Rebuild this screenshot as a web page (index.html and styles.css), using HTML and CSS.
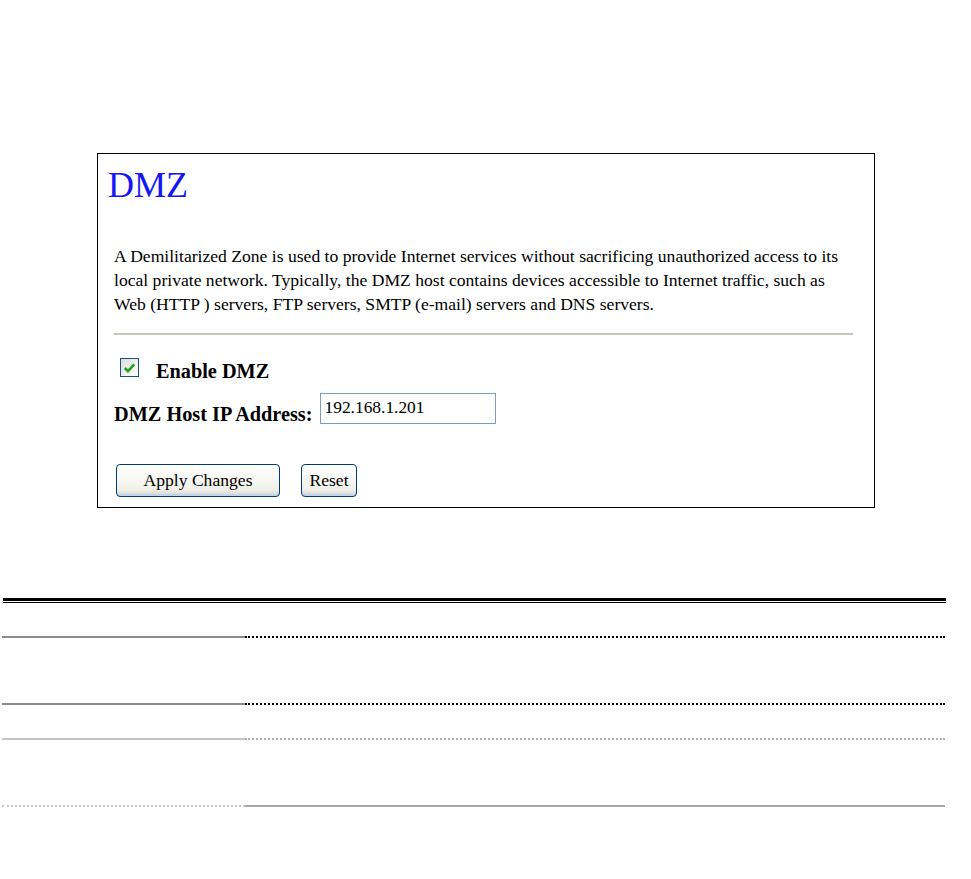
FILE: index.html
```html
<!DOCTYPE html>
<html lang="en">
<head>
  <meta charset="UTF-8" />
  <title>DMZ</title>
  <link rel="stylesheet" href="styles.css">
</head>
<body>
  <div class="panel">
    <h1 class="title">DMZ</h1>
    <p class="intro">A Demilitarized Zone is used to provide Internet services without sacrificing unauthorized access to its<br>
      local private network. Typically, the DMZ host contains devices accessible to Internet traffic, such as<br>
      Web (HTTP ) servers, FTP servers, SMTP (e-mail) servers and DNS servers.</p>
    <div class="sep"></div>

    <label class="row enable">
      <span class="check">
        <svg width="13" height="12" viewBox="0 0 13 12"><path d="M1.8 6 L5 9.2 L11.2 2.4" fill="none" stroke="#21a121" stroke-width="2.6"/></svg>
      </span>
      <b>Enable DMZ</b>
    </label>

    <div class="row host">
      <b>DMZ Host IP Address:</b>
      <input class="ip" type="text" value="192.168.1.201">
    </div>

    <div class="actions">
      <button class="btn apply">Apply Changes</button>
      <button class="btn reset">Reset</button>
    </div>
  </div>

  <div class="doc">
    <div class="rule"></div>
    <div class="grid">
      <div class="cell l dark"></div><div class="cell r dark"></div>
      <div class="cell l dark tall"></div><div class="cell r dark tall"></div>
      <div class="cell l light"></div><div class="cell r light"></div>
      <div class="cell l last tall"></div><div class="cell r last tall"></div>
    </div>
  </div>
</body>
</html>
```

FILE: styles.css
```css
body {
  margin: 0;
  background: #fff;
  font-family: "Liberation Serif", "Times New Roman", serif;
  color: #000;
}

.panel {
  margin: 153px 0 0 97px;
  width: 739px;
  height: 353px;
  border: 1px solid #000;
  padding: 0 21px 0 16px;
}

.title {
  margin: 11px 0 0 -6px;
  font-weight: normal;
  font-size: 36px;
  line-height: 40px;
  color: #1515f5;
}

.intro {
  margin: 39px 0 0;
  font-size: 17.6px;
  line-height: 24px;
}

.sep {
  margin-top: 17px;
  height: 0;
  border-top: 2px solid #c9c5bb;
}

.row {
  display: flex;
  align-items: flex-start;
  font-size: 20.3px;
  line-height: 24px;
  height: 24px;
}

.enable {
  margin: 24px 0 0 6px;
  gap: 17px;
}

.check {
  width: 17px;
  height: 17px;
  margin-top: -1px;
  border: 1px solid #1c5180;
  background: linear-gradient(135deg, #dcdcd7, #fff);
  display: flex;
  align-items: center;
  justify-content: center;
}

.host {
  margin-top: 19px;
  gap: 7px;
}

.ip {
  width: 176px;
  height: 31px;
  box-sizing: border-box;
  margin-top: -9px;
  padding: 0 4px 3px;
  border: 1px solid #7f9db9;
  font-family: "Liberation Serif", serif;
  font-size: 17.4px;
}

.actions {
  display: flex;
  gap: 21px;
  margin: 38px 0 0 2px;
}

.btn {
  height: 33px;
  border: 1px solid #003c74;
  border-radius: 4px;
  background: linear-gradient(#ffffff, #f0f0ea 80%, #d6d0c5);
  box-shadow: inset 0 -2px 0 #c3d4f1, inset 0 1px 0 #fff;
  font-family: "Liberation Serif", serif;
  font-size: 17.6px;
  color: #000;
  padding: 0;
}

.apply { width: 164px; }
.reset { width: 56px; }

.doc {
  margin: 90px 0 0 3px;
  width: 943px;
}

.rule {
  height: 1px;
  border-top: 3px solid #000;
  border-bottom: 1px solid #000;
}

.grid {
  display: grid;
  grid-template-columns: 243px 700px;
  margin-left: -1px;
}

.cell { height: 33px; }
.cell.tall { height: 65px; }

.l.dark { border-bottom: 2px solid #8c8c8c; }
.r.dark { border-bottom: 2px dotted #000; }
.l.light { border-bottom: 2px solid #c6c6c6; }
.r.light { border-bottom: 2px dotted #b0b0b0; }
.l.last { border-bottom: 2px dotted #c6c6c6; }
.r.last { border-bottom: 2px solid #a8a8a8; }
```
